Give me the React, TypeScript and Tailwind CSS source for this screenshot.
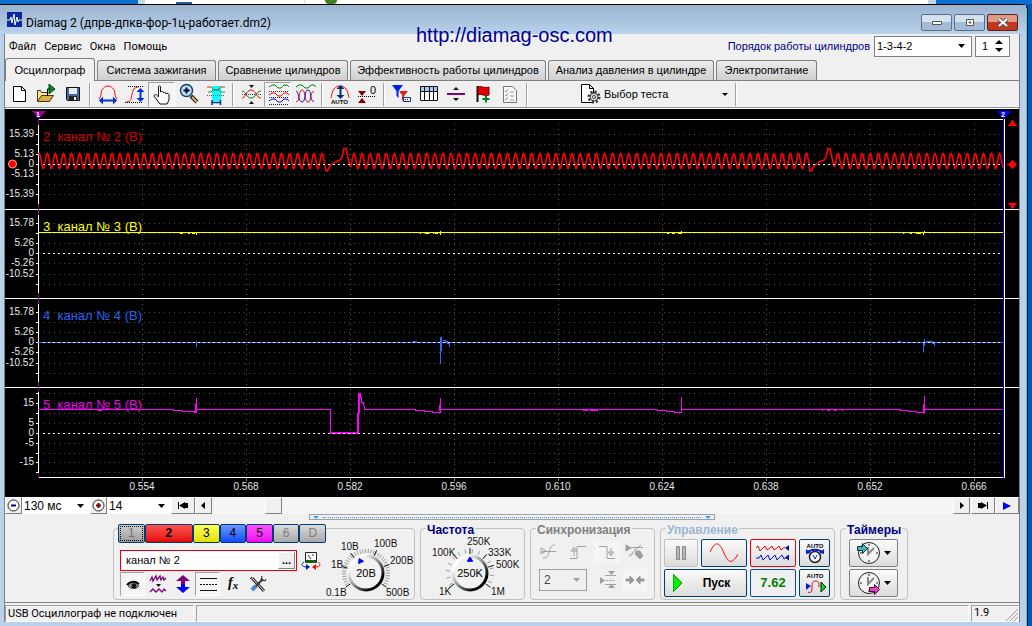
import React, { useState } from 'react';
import clsx from 'clsx';

const uiFont = "font-['Liberation_Sans',Arial,sans-serif]";
const tahoma = "font-['Roboto','DejaVu_Sans_Condensed',sans-serif]";
const dither = 'bg-[repeating-conic-gradient(#ffffff_0_25%,#ececec_0_50%)] bg-[length:2px_2px]';
const raised = 'border border-t-white border-l-white border-r-[#808080] border-b-[#808080] bg-[#f0f0f0]';
const sunken = 'border border-t-[#a0a0a0] border-l-[#a0a0a0] border-r-white border-b-white';

const Icon = ({ w = 24, h = 24, children }: { w?: number; h?: number; children: React.ReactNode }) => (
  <svg width={w} height={h} viewBox={`0 0 ${w} ${h}`} fill="none" className="block shrink-0">
    {children}
  </svg>
);

const Arrow = () => (
  <svg width="7" height="4" viewBox="0 0 7 4" className="pointer-events-none absolute right-[6px] top-1/2 -mt-[2px]">
    <path d="M0 0h7L3.5 4z" fill="currentColor" />
  </svg>
);

/* ---------- toolbar ---------- */

interface Tool {
  label: string;
  pressed?: boolean;
  icon: React.ReactNode;
}

const wave = (y: number, c: string) => <path d={`M3 ${y}l3-2 3 0 3 3 3 0 3-3 3 0 2 2`} stroke={c} />;

const toolGroups: Tool[][] = [
  [
    { label: 'Новый', icon: <path d="M6.500 4.500h8l4 4v11h-12zM14.500 4.500v4h4" fill="#fff" stroke="#000" /> },
    {
      label: 'Открыть',
      icon: (
        <>
          <path d="M3.500 19.500v-11h3l1 2h6v3" fill="#ffe680" stroke="#333" />
          <path d="M3.500 19.500l4-6h12l-4 6z" fill="#d8b050" stroke="#4a3a00" />
          <path d="M15 2l6 5-6 5z" fill="#009030" stroke="#004010" />
          <path d="M13.500 14v-7h3" stroke="#000" />
        </>
      ),
    },
    {
      label: 'Сохранить',
      icon: (
        <>
          <path d="M5.500 5.500h13v13h-12l-1-1z" fill="#4668a0" stroke="#111" />
          <path d="M8 6h8v6H8z" fill="#e8eef8" />
          <path d="M8 14h8v4H8z" fill="#222" />
          <path d="M13 15h2v3h-2z" fill="#fff" />
        </>
      ),
    },
  ],
  [
    {
      label: 'Масштаб по времени',
      icon: (
        <>
          <path d="M3 17c1-2 2-2 2-5 0-5 4-8 7-8s7 3 7 8c0 3 1 3 2 5" stroke="#f00" />
          <path d="M4 18.500h16" stroke="#0033d0" strokeWidth="2" />
          <path d="M3 18.500l4-4v8zM21 18.500l-4-4v8z" fill="#0033d0" />
        </>
      ),
    },
    {
      label: 'Масштаб по амплитуде',
      icon: (
        <>
          <path d="M5 4.500h16M2 20.500h18" stroke="#000" strokeDasharray="1 1" />
          <path d="M3 20c6 0 5-4 6-8s2-7 7-7" stroke="#f00" />
          <path d="M17.500 8v10" stroke="#0033d0" strokeWidth="2" />
          <path d="M17.500 6l4 4h-8zM17.500 20l4-4h-8z" fill="#0033d0" />
        </>
      ),
    },
    {
      label: 'Рука',
      pressed: true,
      icon: (
        <path
          d="M8.500 14V4.500c0-1 2-1 2 0V10c0-1 3-1 3 1 0-1 2.500-1 2.500 1 0-1 3-1 3 1v5l-2 4h-7l-6-8c0-2 3-2 4.500 1z"
          fill="#fff"
          stroke="#111"
        />
      ),
    },
    {
      label: 'Лупа',
      icon: (
        <>
          <path d="M14 14l6 6" stroke="#222" strokeWidth="4" />
          <path d="M15 15l5 5" stroke="#e0b060" strokeWidth="2" />
          <circle cx="9.500" cy="8.500" r="6" fill="#bfe0fa" stroke="#15406e" strokeWidth="1.500" />
          <path d="M9.500 5.500v6M6.500 8.500h6" stroke="#003" strokeWidth="2" />
        </>
      ),
    },
    {
      label: 'Измерение',
      icon: (
        <>
          <path d="M8 4h9v15H8z" fill="#00ffff" />
          <path d="M3 5h4l3 3h4l3-3h4" stroke="#c04020" />
          <path d="M4 10h3l2-2h6l2 2h4" stroke="#00a040" />
          <path d="M3 13.500h18" stroke="#555" strokeDasharray="1 1" />
          <path d="M8 20.500h9M8 18v5M16.500 18v5" stroke="#003090" strokeWidth="1.500" />
        </>
      ),
    },
  ],
  [
    {
      label: 'Свести',
      icon: (
        <>
          <path d="M3 9c4 0 4 7 9 7s5-7 10-7" stroke="#008000" />
          <path d="M3 16c4 0 4-8 9-8s5 8 10 8" stroke="#f00" />
          <path d="M3 12.500h19" stroke="#333" strokeDasharray="1 1" />
          <path d="M10 3h5l-2.500 3zM10 22h5l-2.500-3z" fill="#111" />
        </>
      ),
    },
    {
      label: 'Разнести',
      pressed: true,
      icon: (
        <>
          {wave(5, '#008000')}
          <path d="M3 9.500h19M3 15.500h19M3 22.500h19" stroke="#222" strokeDasharray="1 1" />
          {wave(13, '#f00')}
          {wave(19, '#00f')}
        </>
      ),
    },
    {
      label: 'Наложить',
      icon: (
        <>
          {wave(5, '#008000')}
          <path d="M3 20c5-1 2-12 6-12s2 12 6 12 1-9 6-11" stroke="#f00" />
          <path d="M3 9c3 0 2 11 6 11s2-12 6-12 1 10 6 12" stroke="#0020d0" />
        </>
      ),
    },
  ],
  [
    {
      label: 'Автомасштаб',
      icon: (
        <>
          <path d="M3 16c1-3 1-12 9-12s8 9 9 12" stroke="#f00" />
          <path d="M12.500 6v9" stroke="#003080" strokeWidth="2" />
          <path d="M12.500 3l4 4h-8zM12.500 17l4-4h-8z" fill="#003080" />
          <text x="3" y="22" fontSize="6" fontWeight="bold" fill="#000">AUTO</text>
        </>
      ),
    },
    {
      label: 'Обнулить',
      icon: (
        <>
          <path d="M3 9h8l-4 5zM3 21h8l-4-5z" fill="#800000" />
          <path d="M3 14.500h18" stroke="#000" strokeDasharray="1 1" />
          <text x="15" y="12" fontSize="11" fill="#000">0</text>
        </>
      ),
    },
  ],
  [
    {
      label: 'Маркеры',
      icon: (
        <>
          <path d="M2 3h11L8.500 9v7l-2-2V9z" fill="#0020f0" />
          <path d="M9 9h9l-4 5v6l-2-2v-5z" fill="#e02020" />
          <path d="M13.500 15.500h7v4h-7z" fill="#fff" stroke="#0030a0" />
          <path d="M15 17.500h4" stroke="#0030a0" strokeDasharray="1 1" />
        </>
      ),
    },
    {
      label: 'Таблица',
      icon: (
        <>
          <path d="M3.500 4.500h17v14h-17z" fill="#fff" stroke="#111" />
          <path d="M4 5h16v4H4z" fill="#a8ccf0" />
          <path d="M3.500 9.500h17M7.500 5v13M12.500 5v13M16.500 5v13" stroke="#111" />
        </>
      ),
    },
    {
      label: 'Разделитель',
      icon: (
        <>
          <path d="M3 12h18" stroke="#800080" strokeWidth="2" />
          <path d="M9 8h6l-3-3zM9 16h6l-3 3z" fill="#111" />
        </>
      ),
    },
    {
      label: 'Добавить флажок',
      icon: (
        <>
          <path d="M6.500 4v16" stroke="#111" strokeWidth="2" />
          <path d="M7 5c4-2 5 2 11 0v8c-5 2-7-2-11 0z" fill="#e00000" stroke="#700" />
          <path d="M15 13.500v7M11.500 17h7" stroke="#008020" strokeWidth="2" />
        </>
      ),
    },
    {
      label: 'Отчёт',
      icon: (
        <>
          <path d="M5.500 4.500h9l4 4v12h-13z" fill="#f6f6f6" stroke="#777" />
          <path d="M7 9l1 1 2-3M7 13l1 1 2-3M7 17l1 1 2-3M12 10h4M12 14h4M12 18h4" stroke="#999" />
        </>
      ),
    },
  ],
];

const Sep = () => (
  <div className="flex h-[23px] w-2 justify-center">
    <div className="w-px bg-[#a0a0a0]" />
    <div className="w-px bg-white" />
  </div>
);

const Toolbar = () => (
  <div className="flex h-[26px] items-center">
    {toolGroups.map((group, g) => (
      <React.Fragment key={g}>
        {group.map((t) => (
          <button
            key={t.label}
            aria-label={t.label}
            className={clsx('flex h-[25px] w-[27px] items-center justify-center', t.pressed && [dither, sunken])}
          >
            <Icon>{t.icon}</Icon>
          </button>
        ))}
        <Sep />
      </React.Fragment>
    ))}
    <button className="ml-[45px] flex h-6 w-[156px] items-center text-[11px] text-black">
      <Icon w={28}>
        <path d="M5.500 2.500h8l4 4v14h-12zM13.500 2.500v4h4" fill="#fff" stroke="#000" />
        <circle cx="18" cy="15" r="5" stroke="#333" strokeWidth="3" strokeDasharray="2 1.900" />
        <circle cx="18" cy="15" r="4" fill="#cfd8cf" stroke="#444" />
        <circle cx="18" cy="15" r="1.500" fill="#fff" stroke="#444" />
      </Icon>
      <span className="flex-1 text-left">Выбор теста</span>
      <svg width="6" height="3" viewBox="0 0 6 3" className="mr-1"><path d="M0 0h6L3 3z" /></svg>
    </button>
    <Sep />
  </div>
);

/* ---------- oscilloscope ---------- */

const LEFT = 38;
const RIGHT = 1003;

const channels = [
  { n: 2, color: '#d00000', label: 141, zero: 164, rows: [134, 144, 154, 174, 184, 194], marks: [['15.39', 134], ['5.13', 154], ['0', 164], ['-5.13', 174], ['-15.39', 194]] },
  { n: 3, color: '#ffff00', label: 231, zero: 253, rows: [223, 233, 243, 263, 274, 284], marks: [['15.78', 223], ['5.26', 243], ['0', 253], ['-5.26', 263], ['-10.52', 274]] },
  { n: 4, color: '#2a62f0', label: 320, zero: 342, rows: [312, 322, 332, 352, 363, 373], marks: [['15.78', 312], ['5.26', 332], ['0', 342], ['-5.26', 352], ['-10.52', 363]] },
  { n: 5, color: '#e800e8', label: 409, zero: 433, rows: [393, 403, 413, 423, 443, 453, 462, 472], marks: [['15', 403], ['5', 423], ['0', 433], ['-5', 443], ['-15', 462]] },
] as const;

const times = ['0.554', '0.568', '0.582', '0.596', '0.610', '0.624', '0.638', '0.652', '0.666'];

// crankshaft signal: steady teeth with two missing-tooth gaps
const sine = (from: number, to: number, peak: number) => {
  let d = '';
  for (let x = from; x <= to; x += 0.5) {
    const y = 161 - 7.5 * Math.cos(((x - peak) / 8.08) * 2 * Math.PI);
    d += `L${x} ${y.toFixed(1)}`;
  }
  return d;
};
const gap = (x: number) =>
  `L${x} 171L${x + 1.5} 171L${x + 4} 166L${x + 9} 162L${x + 14} 160L${x + 16} 157L${x + 18} 148.500L${x + 20} 148.500L${x + 22} 158L${x + 24} 166`;
const crank =
  'M38 154' + sine(39, 325, 322) + gap(326) + sine(351, 809, 354) + gap(810) + sine(835, RIGHT, 838);

const Scope = () => (
  <svg viewBox="5 109 1014 388" className="block w-full bg-black" shapeRendering="crispEdges" fill="none">
    {channels.map((c) => (
      <g key={c.n}>
        {c.rows.map((y) => (
          <path key={y} d={`M44 ${y}.5H1000`} stroke="#4a4a4a" strokeDasharray="1 4" />
        ))}
        {[...c.rows, c.zero].map((y) => (
          <path key={y} d={`M36 ${y}.5h2`} stroke="#fff" />
        ))}
        {c.marks.map(([t, y]) => (
          <text key={t} x="34" y={y + 3} fontSize="10" textAnchor="end" fill="#e8e8e8">{t}</text>
        ))}
      </g>
    ))}
    {times.map((t, i) => (
      <g key={t}>
        <path d={`M${142 + i * 104}.5 124V476`} stroke="#5a5a5a" strokeDasharray="1 4" />
        <path d={`M${142 + i * 104}.5 478v3`} stroke="#808080" />
        <text x={142 + i * 104} y="490" fontSize="10" textAnchor="middle" fill="#e8e8e8">{t}</text>
      </g>
    ))}

    <path d="M38 119.500H1004M5 209.500H1019M5 298.500H1019M5 387.500H1019M38 477.500H1005M38.500 119V478M1004.500 119V478" stroke="#fff" />
    <path d="M38.500 115v10M38.500 204v11M38.500 293v11M38.500 382v10M38.500 473v5" stroke="#800080" />
    <path d="M1003.500 116V478" stroke="#0000f0" />

    <path d={crank} stroke="#ff0000" strokeWidth="1.600" shapeRendering="auto" />
    <path
      d={`M${LEFT} 232.5H${RIGHT}M180 233.5h3M188 233.5h2M192 233.5h3M196.5 232v3M420 233.5h1M425 233.5h4M433 233.5h1M435 233.5h3M440.500 231v4M667 233.5h2M672 233.5h3M678 233.5h3M681.500 231v3M903 233.5h1M910 233.5h2M916 233.5h5M923.500 232v3M924.500 231v2`}
      stroke="#ffff00"
    />
    <path d={`M${LEFT} 342.5H${RIGHT}M196.5 341v6M413 341.5h4M440.500 337v27M441.500 337v14M443 339.500v1h2v1h2v2h2v3M898 341.500h3M923.500 342v10M924.500 339v7M926 341.500h6v2h2v2`} stroke="#2f6bff" />
    <path
      d={`M${LEFT} 409.5H173v1h9v1h12v1h2.500V398v14v-2.500H330.500V433H358V393.500h2V397h1v5h2l2 7.500H415.500v1h9v1h8v1h7.500V398v11.500H657v1h9v1h8v1h7V397v12.500H900.500v1h8v1h8v1h7.500V396v16l1-2.500H${RIGHT}`}
      stroke="#ff00ff"
    />
    <path d="M331 432.500H358M357.500 413v20M359.500 394v19M195.500 404v8M439.500 405v6M681.500 404v7M923.500 404v8M98 410.500h4M583 410.500h5M590 410.500h8M822 410.500h1M827 410.500h3M834 410.500h3M842 410.500h1" stroke="#ff00ff" />

    {channels.map((c) => (
      <g key={c.n}>
        <path d={`M43 ${c.zero}.5H${RIGHT}`} stroke="#fff" strokeDasharray="2 3" />
        <text x="43" y={c.label} fontSize="13" fill={c.color} xmlSpace="preserve">{`${c.n}  канал № ${c.n} (B)`}</text>
      </g>
    ))}

    <path d="M31 111h15l-7 7z" fill="#900090" />
    <text x="38" y="117" fontSize="7" fontWeight="bold" textAnchor="middle" fill="#fff">1</text>
    <path d="M996 111h15l-7 7z" fill="#0000ff" />
    <text x="1003" y="117" fontSize="7" fontWeight="bold" textAnchor="middle" fill="#fff">2</text>
    <circle cx="12.500" cy="164" r="4" fill="#f00" stroke="#ffa0a0" shapeRendering="auto" />
    <path d="M1008 126h9l-4.500-6zM1012.500 160l5 4.500-5 4.500-5-4.500zM1008 203h9l-4.500 6z" fill="#f00" />
  </svg>
);

/* ---------- navigation row ---------- */

const NavRow = () => (
  <div className="flex h-[17px] items-stretch bg-[#f0f0f0] text-[12px]">
    <button aria-label="Уменьшить" className={clsx('flex w-[17px] items-center justify-center', raised)}>
      <Icon w={13} h={13}>
        <circle cx="6.500" cy="6.500" r="5.500" fill="#fff" stroke="#222" />
        <path d="M4 6.500h5" stroke="#000080" strokeWidth="2" />
      </Icon>
    </button>
    <div className="relative w-[68px] bg-white">
      <select aria-label="Развёртка" className="block h-full w-full appearance-none pl-[2px]"><option>130 мс</option></select>
      <Arrow />
    </div>
    <button aria-label="Увеличить" className={clsx('flex w-[17px] items-center justify-center', raised)}>
      <Icon w={13} h={13}>
        <circle cx="6.500" cy="6.500" r="5.500" fill="#fff" stroke="#222" />
        <path d="M4 6.500h5M6.500 4v5" stroke="#800000" strokeWidth="2" />
      </Icon>
    </button>
    <div className="relative w-[64px] bg-white">
      <select aria-label="Деление" className="block h-full w-full appearance-none pl-[2px]"><option>14</option></select>
      <Arrow />
    </div>
    <button aria-label="В начало" className={clsx('flex w-6 items-center justify-center', raised)}>
      <Icon w={12} h={7}><path d="M1 0h1v7H1zM8 0v7L2 3.500zM8 1h3v5H8z" fill="#000" /></Icon>
    </button>
    <button aria-label="Назад" className={clsx('flex w-[17px] items-center justify-center', raised)}>
      <Icon w={5} h={7}><path d="M4 0v7L0 3.500z" fill="#000" /></Icon>
    </button>
    <div className={clsx('flex-1 pl-[53px]', dither)}>
      <div className={clsx('h-full w-[17px]', raised)} />
    </div>
    <button aria-label="Вперёд" className={clsx('flex w-[17px] items-center justify-center', raised)}>
      <Icon w={5} h={7}><path d="M1 0v7l4-3.500z" fill="#000" /></Icon>
    </button>
    <button aria-label="В конец" className={clsx('ml-px flex w-6 items-center justify-center', raised)}>
      <Icon w={12} h={7}><path d="M1 1h3V0l6 3.500L4 7V6H1zM10 0h1v7h-1z" fill="#000" /></Icon>
    </button>
    <button aria-label="Воспроизвести" className={clsx('flex w-6 items-center justify-center', raised)}>
      <Icon w={9} h={8}><path d="M0 0v8l8-4z" fill="#00f" /></Icon>
    </button>
  </div>
);

/* ---------- control panel ---------- */

const chButtons = [
  { n: '1', cls: 'w-[27px] from-[#d0d0d0] to-[#9a9a9a] text-[#707070] outline-1 outline-dotted outline-black -outline-offset-3' },
  { n: '2', cls: 'w-[49px] from-[#ff5050] to-[#e00000] font-bold' },
  { n: '3', cls: 'w-[27px] from-[#ffff50] to-[#e0e000]' },
  { n: '4', cls: 'w-[27px] from-[#6a96ff] to-[#1048ff]' },
  { n: '5', cls: 'w-[27px] from-[#ff50ff] to-[#f000f0]' },
  { n: '6', cls: 'w-[27px] from-[#dcdcdc] to-[#a8a8a8] text-[#808080]' },
  { n: 'D', cls: 'w-[27px] from-[#dcdcdc] to-[#a8a8a8] text-[#808080]' },
];

const chTools: Tool[] = [
  {
    label: 'Показать',
    pressed: true,
    icon: (
      <>
        <path d="M7 13c2-4 9-4 11 0-2 3-8 4-11 0z" fill="#999" stroke="#555" />
        <path d="M6 12c3-4 8-4 12-1" stroke="#000" strokeWidth="2" />
        <circle cx="13" cy="13" r="2.500" fill="#111" />
      </>
    ),
  },
  {
    label: 'Фильтр',
    icon: (
      <>
        <path d="M4 8l2-4 1 4 3-5 1 4 3-4 1 4 2-3 1 3 2-2M4 19l3-3 3 3 3-3 3 3 2-3 2 2" stroke="#800080" strokeWidth="1.300" />
        <path d="M10 11h5l-2.500 3z" fill="#111" />
      </>
    ),
  },
  {
    label: 'Сдвиг',
    icon: (
      <>
        <path d="M12 2l7 6h-5v3h-4V8H5z" fill="#800080" />
        <path d="M12 20l7-6h-5v-3h-4v3H5z" fill="#0000ff" />
      </>
    ),
  },
  {
    label: 'Уровни',
    pressed: true,
    icon: (
      <>
        <path d="M4 5.500h17M4 17.500h17" stroke="#111" />
        <path d="M4 11.500h17" stroke="#111" strokeDasharray="2 1" />
      </>
    ),
  },
  {
    label: 'Функция',
    icon: (
      <text x="7" y="14" fontSize="14" fontStyle="italic" fontWeight="bold" fill="#000" className="font-['Liberation_Serif',serif]">
        f<tspan fontSize="11" dy="2">x</tspan>
      </text>
    ),
  },
  {
    label: 'Настройка',
    icon: (
      <>
        <path d="M6 5l12 13" stroke="#333" strokeWidth="3" />
        <path d="M6 5l12 13" stroke="#ddd" />
        <path d="M4 6l2-2M16 3l-1 4 4 1 1-2" stroke="#222" />
        <path d="M17 6l-8 8" stroke="#333" strokeWidth="2" />
        <path d="M10 13l-4 4" stroke="#5080d0" strokeWidth="4" />
      </>
    ),
  },
];

interface DialProps {
  cx: number;
  width: number;
  value: string;
  pointer: number;
  labels: [string, number, number][];
  majors: number[];
  step: number;
}

// angle 0 points up, the scale runs from -125 to 125 degrees
const at = (cx: number, r: number, deg: number) => {
  const a = (deg * Math.PI) / 180;
  return `${(cx + r * Math.sin(a)).toFixed(1)} ${(37 - r * Math.cos(a)).toFixed(1)}`;
};

const Dial = ({ cx, width, value, pointer, labels, majors, step }: DialProps) => {
  const minors: number[] = [];
  for (let a = -120; a <= 120; a += step) minors.push(a);
  return (
    <svg width={width} height="63" viewBox={`0 0 ${width} 63`} fill="none" className="block shrink-0">
      <defs>
        <linearGradient id={`rim-${value}`} x1="0" y1="0" x2="1" y2="1">
          <stop offset="0.2" stopColor="#ffffff" />
          <stop offset="0.5" stopColor="#909090" />
          <stop offset="0.8" stopColor="#000000" />
        </linearGradient>
      </defs>
      {minors.map((a) => (
        <path key={a} d={`M${at(cx, 20, a)}L${at(cx, 24, a)}`} stroke="#999" />
      ))}
      {majors.map((a) => (
        <path key={a} d={`M${at(cx, 19, a)}L${at(cx, 25, a)}`} stroke="#111" />
      ))}
      <circle cx={cx} cy="37" r="17" fill="#f2f2f2" stroke={`url(#rim-${value})`} strokeWidth="3" />
      <path d={`M${at(cx, 16, pointer)}L${at(cx, 12, pointer - 13)}L${at(cx, 12, pointer + 13)}z`} fill="#00f" stroke="#00f" />
      <text x={cx} y="41" fontSize="11" textAnchor="middle" fill="#000">{value}</text>
      {labels.map(([t, x, y]) => (
        <text key={t} x={x} y={y} fontSize="10" fill="#111">{t}</text>
      ))}
    </svg>
  );
};

interface GroupProps {
  title: string;
  className: string;
  legend: string;
  children: React.ReactNode;
}

const Group = ({ title, className, legend, children }: GroupProps) => (
  <fieldset className={clsx('h-20 min-w-0 shrink-0 rounded-[4px] border border-[#c0c0c0]', className)}>
    <legend className={clsx('ml-[5px] h-4 px-px pt-[2px] text-[12px] font-bold leading-4', legend)}>{title}</legend>
    {children}
  </fieldset>
);

const bigBtn = 'flex items-center justify-center rounded-[2px] border bg-linear-to-b from-[#fafafa] to-[#dcdcdc]';

const syncIcons = [
  'M1 5v6l5-3zM2 8.500h14M3 15c5 0 5-2 6-6s2-7 6-7',
  'M2 15.500h7v-12h9M6 13v-7M3 8h6l-3-4z',
  'M2 3.500h8v12h8M14 5v7M11 9h6l-3 4z',
  'M1 2v6l5-3zM4 4.500h14M4 13c4 0 4-6 7-7l5-4M11 8h4l3 5-3 3-5-5z',
];

const ControlPanel = () => {
  const [name, setName] = useState('канал № 2');
  return (
    <div className="flex gap-[5px] pb-[2px] pl-[108px]">
      <div className="mt-2 flex h-[72px] w-[302px] shrink-0 rounded-[4px] border border-[#c0c0c0]">
        <div className="-mt-[5px] w-[212px] pl-1">
          <div className="flex bg-[#f0f0f0]">
            {chButtons.map((b) => (
              <button
                key={b.n}
                className={clsx('h-[19px] rounded-[2px] border border-[#003c74] bg-linear-to-b text-[12px] leading-[17px]', b.cls)}
              >
                {b.n}
              </button>
            ))}
          </div>
          <div className="mt-[7px] flex items-center gap-1 pl-[2px]">
            <div className="flex h-[21px] w-[177px] items-center border border-red-600 bg-white pr-px">
              <input
                aria-label="Имя канала"
                value={name}
                onChange={(e) => setName(e.target.value)}
                className="min-w-0 flex-1 bg-white px-[5px] text-[11px]"
              />
              <button className={clsx('h-[17px] w-[17px] text-[11px] font-bold leading-[11px]', raised)}>...</button>
            </div>
            <button aria-label="Щуп">
              <Icon w={20} h={20}>
                <path d="M4.500 1.500h11v10h-11z" fill="#fff" stroke="#222" />
                <path d="M5 9h10v3H5z" fill="#106010" />
                <path d="M7 4l3 4M11 4h2" stroke="#333" />
                <path d="M3 11c-3 2-3 5 3 5" stroke="#0020a0" />
                <path d="M17 11c3 2 3 5-3 5" stroke="#f00" />
                <path d="M5 13l4 3-4 3z" fill="#0020a0" />
                <path d="M15 13l-4 3 4 3z" fill="#f00" />
              </Icon>
            </button>
          </div>
          <div className="mt-px flex pl-[2px]">
            {chTools.map((t) => (
              <button key={t.label} aria-label={t.label} className={clsx('flex h-6 w-[25px] items-center justify-center', t.pressed && [dither, sunken])}>
                <Icon h={22}>{t.icon}</Icon>
              </button>
            ))}
          </div>
        </div>
        <div className="mt-[7px]">
          <Dial
            cx={40}
            width={88}
            value="20В"
            pointer={-25}
            step={7}
            majors={[-125, -75, -38, 25, 70, 125]}
            labels={[['0.1B', 0, 60], ['1B', 5, 32], ['10B', 15, 14], ['100B', 48, 11], ['200B', 64, 28], ['500B', 60, 60]]}
          />
        </div>
      </div>

      <Group title="Частота" className="w-[105px]" legend="text-[#000080]">
        <Dial
          cx={49}
          width={100}
          value="250K"
          pointer={0}
          step={18}
          majors={[-125, -42, 0, 42, 72, 125]}
          labels={[['1K', 18, 59], ['100K', 11, 20], ['250K', 46, 9], ['333K', 67, 20], ['500K', 75, 32], ['1M', 70, 59]]}
        />
      </Group>

      <Group title="Синхронизация" className="w-[125px]" legend="text-[#808080]">
        <div className="flex flex-col gap-[6px] pl-[6px] pt-[5px]">
          <div className="flex justify-between pr-[6px]">
            {syncIcons.map((d, i) => (
              <button key={i} disabled aria-label={`Синхронизация ${i + 1}`} className={clsx('flex h-[22px] w-[26px] items-center justify-center', i === 2 && dither)}>
                <Icon w={20} h={18}><path d={d} stroke="#a0a0a0" fill={i === 3 ? '#a0a0a0' : 'none'} /></Icon>
              </button>
            ))}
          </div>
          <div className="flex items-center gap-1 pl-[2px]">
            <div className="relative mr-1 h-[22px] w-12 border border-[#a0a0a0] text-[#a0a0a0]">
              <select disabled aria-label="Канал синхронизации" className="block h-full w-full appearance-none pl-1 text-[12px] text-[#444] opacity-100"><option>2</option></select>
              <Arrow />
            </div>
            <button disabled aria-label="Фронты" className="flex h-[22px] w-6 items-center justify-center">
              <Icon w={20} h={18}>
                <path d="M3 6v7l5-3.500zM11 0h7l-3.500 4zM11 17h7l-3.500-4z" fill="#a0a0a0" />
                <path d="M8 4.500h11M8 13.500h11" stroke="#a0a0a0" />
                <path d="M6 9.500h11" stroke="#a0a0a0" strokeDasharray="2 1" />
              </Icon>
            </button>
            <button disabled aria-label="По центру" className={clsx('flex h-[22px] w-6 items-center justify-center', dither)}>
              <Icon w={20} h={12}><path d="M1 5h4V2l4 4-4 4V7H1zM19 5h-4V2l-4 4 4 4V7h4z" fill="#999" stroke="#999" /></Icon>
            </button>
          </div>
        </div>
      </Group>

      <Group title="Управление" className="w-[175px]" legend="text-[#9db6d0]">
        <div className="grid grid-cols-[34px_46px_46px_31px] grid-rows-[28px_28px] gap-x-[3px] gap-y-[2px] pl-[3px] pt-[3px]">
          <button disabled aria-label="Пауза" className={clsx(bigBtn, 'border-[#c0c0c0]')}>
            <Icon w={12} h={16}><path d="M1.500 1.500h3v13h-3zM7.500 1.500h3v13h-3z" fill="#b8b8b8" stroke="#888" /></Icon>
          </button>
          <button aria-label="Один канал" className={clsx(bigBtn, 'border-[#003c74]')}>
            <Icon w={28} h={20}><path d="M0 9c5-11 9-11 14 1s9 10 14 1" stroke="#f00" /></Icon>
          </button>
          <button aria-label="Все каналы" className={clsx(bigBtn, 'border-red-600')}>
            <Icon w={34} h={20}>
              <path d="M0 5l2-2 2 5 3-3 2-2 2 4 3-2 2-2 2 4 3-2 2-2 2 4 4-3" stroke="#f00" />
              <path d="M0 15h3l2-3 2 5 3-3 2-2 2 5 3-3 2-2 2 5 3-3 2-2 2 4 3-2" stroke="#0010e0" />
              <path d="M29 5l4-3v6zM29 14.500l4-3v6z" fill="#0010a0" />
            </Icon>
          </button>
          <button aria-label="Авто напряжение" className={clsx(bigBtn, 'border-[#003c74]')}>
            <Icon w={26} h={24}>
              <text x="13" y="7" fontSize="6" fontWeight="bold" textAnchor="middle" fill="#000">AUTO</text>
              <path d="M6 11c3-3 11-3 14 0" stroke="#0020d0" strokeWidth="2" />
              <path d="M4 13V8l5 4zM22 13V8l-5 4z" fill="#0020d0" />
              <circle cx="13" cy="16" r="5.500" fill="#fff" stroke="#222" strokeWidth="1.500" />
              <path d="M11 14l2 4 2-4" stroke="#0020d0" />
            </Icon>
          </button>
          <button className={clsx(bigBtn, 'col-span-2 gap-5 border-[#003c74] pr-2 text-[12px] font-bold')}>
            <Icon w={10} h={18}><path d="M0 0v18l9-9z" fill="#00f000" stroke="#009000" /></Icon>
            Пуск
          </button>
          <button className="rounded-[2px] border border-[#0050a0] bg-[#f0f0f0] text-[13px] font-bold text-[#008000]">7.62</button>
          <button aria-label="Авто пуск" className={clsx(bigBtn, 'border-[#003c74]')}>
            <Icon w={26} h={24}>
              <text x="13" y="7" fontSize="6" fontWeight="bold" textAnchor="middle" fill="#000">AUTO</text>
              <path d="M6 21c4 2 4-2 4-6s1-5 4-5 3 3 3 6" stroke="#d00020" />
              <path d="M4 12l5 3-5 4z" fill="#0020e0" />
              <path d="M19 11l5 5-5 5z" fill="#00e000" stroke="#111" />
            </Icon>
          </button>
        </div>
      </Group>

      <Group title="Таймеры" className="w-[68px]" legend="text-[#000080]">
        <div className="flex flex-col gap-[2px] pl-2 pt-[3px]">
          {['Таймер пуска', 'Таймер останова'].map((t, i) => (
            <button key={t} aria-label={t} className={clsx(bigBtn, 'h-7 w-[49px] gap-1 border-[#808080]')}>
              <Icon>
                <circle cx="13" cy="12" r="10.500" fill="#f4f4f4" stroke="#222" />
                <path d="M13 3v2M13 19v2M22 12h-2M6 12H4M12 6v7l6-6" stroke="#888" strokeWidth="2" />
                {i === 0 ? (
                  <path d="M1.500 5.500h5v-3l5 5-5 5v-3h-5z" fill="#50b0b0" stroke="#004040" />
                ) : (
                  <path d="M13.500 16.500h5v-3l5 5-5 5v-3h-5z" fill="#e040c0" stroke="#400040" />
                )}
              </Icon>
              <svg width="7" height="4" viewBox="0 0 7 4"><path d="M0 0h7L3.500 4z" /></svg>
            </button>
          ))}
        </div>
      </Group>
    </div>
  );
};

/* ---------- window ---------- */

const tabs = [
  { name: 'Осциллограф', cls: 'w-[90px]' },
  { name: 'Система зажигания', cls: 'w-[119px]' },
  { name: 'Сравнение цилиндров', cls: 'w-[130px]' },
  { name: 'Эффективность работы цилиндров', cls: 'w-[196px]' },
  { name: 'Анализ давления в цилиндре', cls: 'w-[166px]' },
  { name: 'Электропитание', cls: 'w-[101px]' },
];

const winBtn = 'flex h-[17px] w-[31px] items-center justify-center rounded-[2px] border border-[#5a7088] bg-linear-to-b from-[#d4e2f0] from-50% to-[#a4bcd6] to-50%';

const App = () => {
  const [active, setActive] = useState('Осциллограф');

  return (
    <div className={clsx('min-h-screen bg-[#0057b8] text-black', uiFont)}>
      <div className="flex h-1 justify-start bg-[#0a6fce]">
        <div className="ml-[138px] w-[7px] bg-[#c4d8ec]" />
        <div className="flex flex-1 bg-white pl-[31px]">
          <div className="mt-[2px] w-4 bg-[#2858a0]" />
          <div className="ml-[112px] w-px bg-[#e0e0e0]" />
          <div className="ml-5 w-3 rounded-b-sm bg-[#408020]" />
        </div>
        <div className="mr-[96px] w-2 bg-[#c4d8ec]" />
      </div>

      <div className="relative mr-1 rounded-tr-md border-r border-t border-black bg-[#b9d1ea]">
        <div className="rounded-tr-md border-r border-[#35d5f5]">
          <div className="flex h-[29px] items-center bg-linear-to-b from-[#9ab4d0] to-[#b9d1ea] pl-[7px] pr-2">
            <Icon w={15} h={15}>
              <path d="M0 0h15v15H0z" fill="#0a2a9a" />
              <path d="M0 8h3l1-3 1 6 2-9 1 11 2-8 1 5 1-2h3" stroke="#fff" />
            </Icon>
            <h1 className={clsx('ml-1 flex-1 pt-[6px] text-[12px]', tahoma)}>Diamag 2 (дпрв-дпкв-фор-1ц-работает.dm2)</h1>
            <div className="mt-[6px] flex gap-[2px]">
              <button aria-label="Свернуть" className={winBtn}>
                <Icon w={12} h={6}><path d="M1.500 1.500h9v3h-9z" fill="#fff" stroke="#555" /></Icon>
              </button>
              <button aria-label="Развернуть" className={winBtn}>
                <Icon w={10} h={9}><path d="M1.500 1.500h7v6h-7z" stroke="#555" fill="#fff" /><path d="M4 4h2v1H4z" stroke="#555" /></Icon>
              </button>
              <button aria-label="Закрыть" className="flex h-[17px] w-[31px] items-center justify-center rounded-[2px] border border-[#5a2020] bg-linear-to-b from-[#e09a88] from-50% to-[#c03820] to-50%">
                <Icon w={12} h={9}>
                  <path d="M2 1l8 7M10 1L2 8" stroke="#555" strokeWidth="4" />
                  <path d="M2 1l8 7M10 1L2 8" stroke="#fff" strokeWidth="2" />
                </Icon>
              </button>
            </div>
          </div>

          <div className="pb-[5px] pl-1 pr-[6px]">
            <div className="border-x border-[#808080] bg-[#f0f0f0]">
              <div className="flex h-6 items-center pr-[9px] text-[11px]">
                <nav className={clsx('flex flex-1 gap-2 pl-1 pt-[2px] text-[11px]', tahoma)}>
                  {['Файл', 'Сервис', 'Окна', 'Помощь'].map((m) => (
                    <a key={m} href="#">{m}</a>
                  ))}
                </nav>
                <label htmlFor="order" className="mr-1 text-[#000080]">Порядок работы цилиндров</label>
                <div className="relative h-[21px] w-[98px] border border-[#808080] bg-white">
                  <select id="order" className="block h-full w-full appearance-none pl-[2px]"><option>1-3-4-2</option></select>
                  <Arrow />
                </div>
                <div className="ml-[3px] flex h-[21px] w-[35px] items-center border border-[#808080] bg-white pl-[6px]">
                  <input aria-label="Цилиндр" defaultValue="1" className="w-[13px]" />
                  <Icon w={8} h={14}><path d="M0 5h8L4 1zM0 9h8l-4 4z" fill="#000" /></Icon>
                </div>
              </div>

              <div role="tablist" className="flex items-end gap-[2px] border-b border-[#808080] text-[11px]">
                {tabs.map((t) => (
                  <button
                    key={t.name}
                    role="tab"
                    aria-selected={t.name === active}
                    onClick={() => setActive(t.name)}
                    className={clsx(
                      'rounded-t-[3px] border border-b-0 border-[#808080] whitespace-nowrap',
                      t.cls,
                      t.name === active ? '-mb-px h-[23px] bg-[#f0f0f0]' : 'h-5 bg-linear-to-b from-[#ececec] to-[#cfcfcf]'
                    )}
                  >
                    {t.name}
                  </button>
                ))}
              </div>

              <Toolbar />
              <div className="h-[2px] border-t border-[#909090] bg-white" />
              <Scope />
              <NavRow />

              <div className="ml-[304px] mr-[304px] flex h-[6px] items-center gap-1 border border-[#a0a0a0] px-[3px] text-[#3399ff]">
                <svg width="6" height="3" viewBox="0 0 6 3"><path d="M0 0h6L3 3z" fill="currentColor" /></svg>
                <div className="flex-1 border-t border-dotted border-[#3399ff]" />
                <svg width="6" height="3" viewBox="0 0 6 3"><path d="M0 0h6L3 3z" fill="currentColor" /></svg>
              </div>

              <ControlPanel />

              <div className={clsx('flex h-5 gap-[2px] border-t border-[#808080] pt-[2px] text-[11px] leading-4', tahoma)}>
                <div className={clsx('w-[189px] pl-[2px] whitespace-nowrap', sunken)}>USB Осциллограф не подключен</div>
                <div className={clsx('flex-1', sunken)} />
                <div className={clsx('flex w-[48px] items-end justify-between pl-[2px]', sunken)}>
                  1.9
                  <Icon w={12} h={12}><path d="M0 12L12 0M4 12l8-8M8 12l4-4" stroke="#a0a0a0" /></Icon>
                </div>
              </div>
            </div>
          </div>
        </div>

        <a href="http://diamag-osc.com" className="absolute left-[416px] top-[16px] text-[20px] leading-[28px] text-[#000090]">
          http://diamag-osc.com
        </a>
      </div>
    </div>
  );
};

export default App;
